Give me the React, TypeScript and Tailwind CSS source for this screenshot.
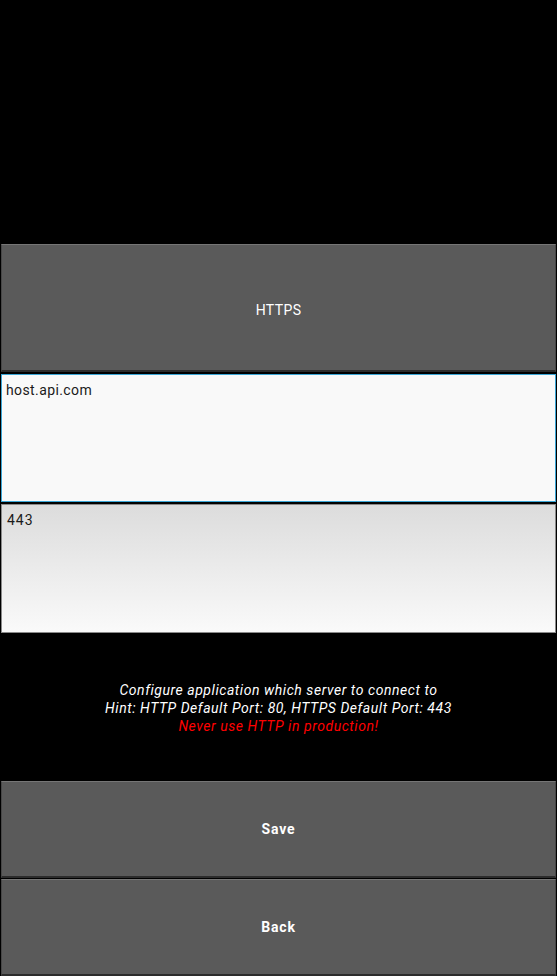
import React from 'react';

const font = { fontFamily: 'Roboto, "Noto Sans", sans-serif' };

const GreyButton = ({ label, bold, className }: { label: string; bold?: boolean; className?: string }) => (
  <button
    className={`w-full flex items-center justify-center bg-[#5a5a5a] border-t border-t-[#767676] border-b-2 border-b-[#2c2c2c] border-x border-x-[#474747] text-white text-[14px] ${
      bold ? 'font-bold tracking-[0.8px]' : 'font-normal tracking-[0.4px]'
    } ${className ?? ''}`}
  >
    {label}
  </button>
);

const App = () => {
  return (
    <div className="w-[557px] h-[976px] bg-black flex flex-col px-px" style={font}>
      <div className="h-[244px]" />
      <GreyButton label="HTTPS" className="h-[129px] pt-[6px]" />

      <div className="mt-[2px] h-[128px] bg-[#f9f9f9] border border-[#3aa6d6] px-[4px] pt-[5px] text-[14px] text-[#1a1a1a] tracking-[0.4px]">
        host.api.com
      </div>

      <div className="mt-[2px] h-[129px] bg-gradient-to-b from-[#dcdcdc] to-[#fafafa] border border-[#8a8a8a] px-[5px] pt-[5px] text-[14px] text-[#1a1a1a] tracking-[1px]">
        443
      </div>

      <div className="mt-[48px] flex flex-col items-center italic text-[14px] leading-[18px] text-white tracking-[0.55px]">
        <span>Configure application which server to connect to</span>
        <span>Hint: HTTP Default Port: 80, HTTPS Default Port: 443</span>
        <span className="text-[#ff0000]">Never use HTTP in production!</span>
      </div>

      <div className="mt-[46px] flex flex-col gap-px">
        <GreyButton label="Save" bold className="h-[97px] pt-[2px]" />
        <GreyButton label="Back" bold className="h-[97px] pt-[2px]" />
      </div>
    </div>
  );
};

export default App;
